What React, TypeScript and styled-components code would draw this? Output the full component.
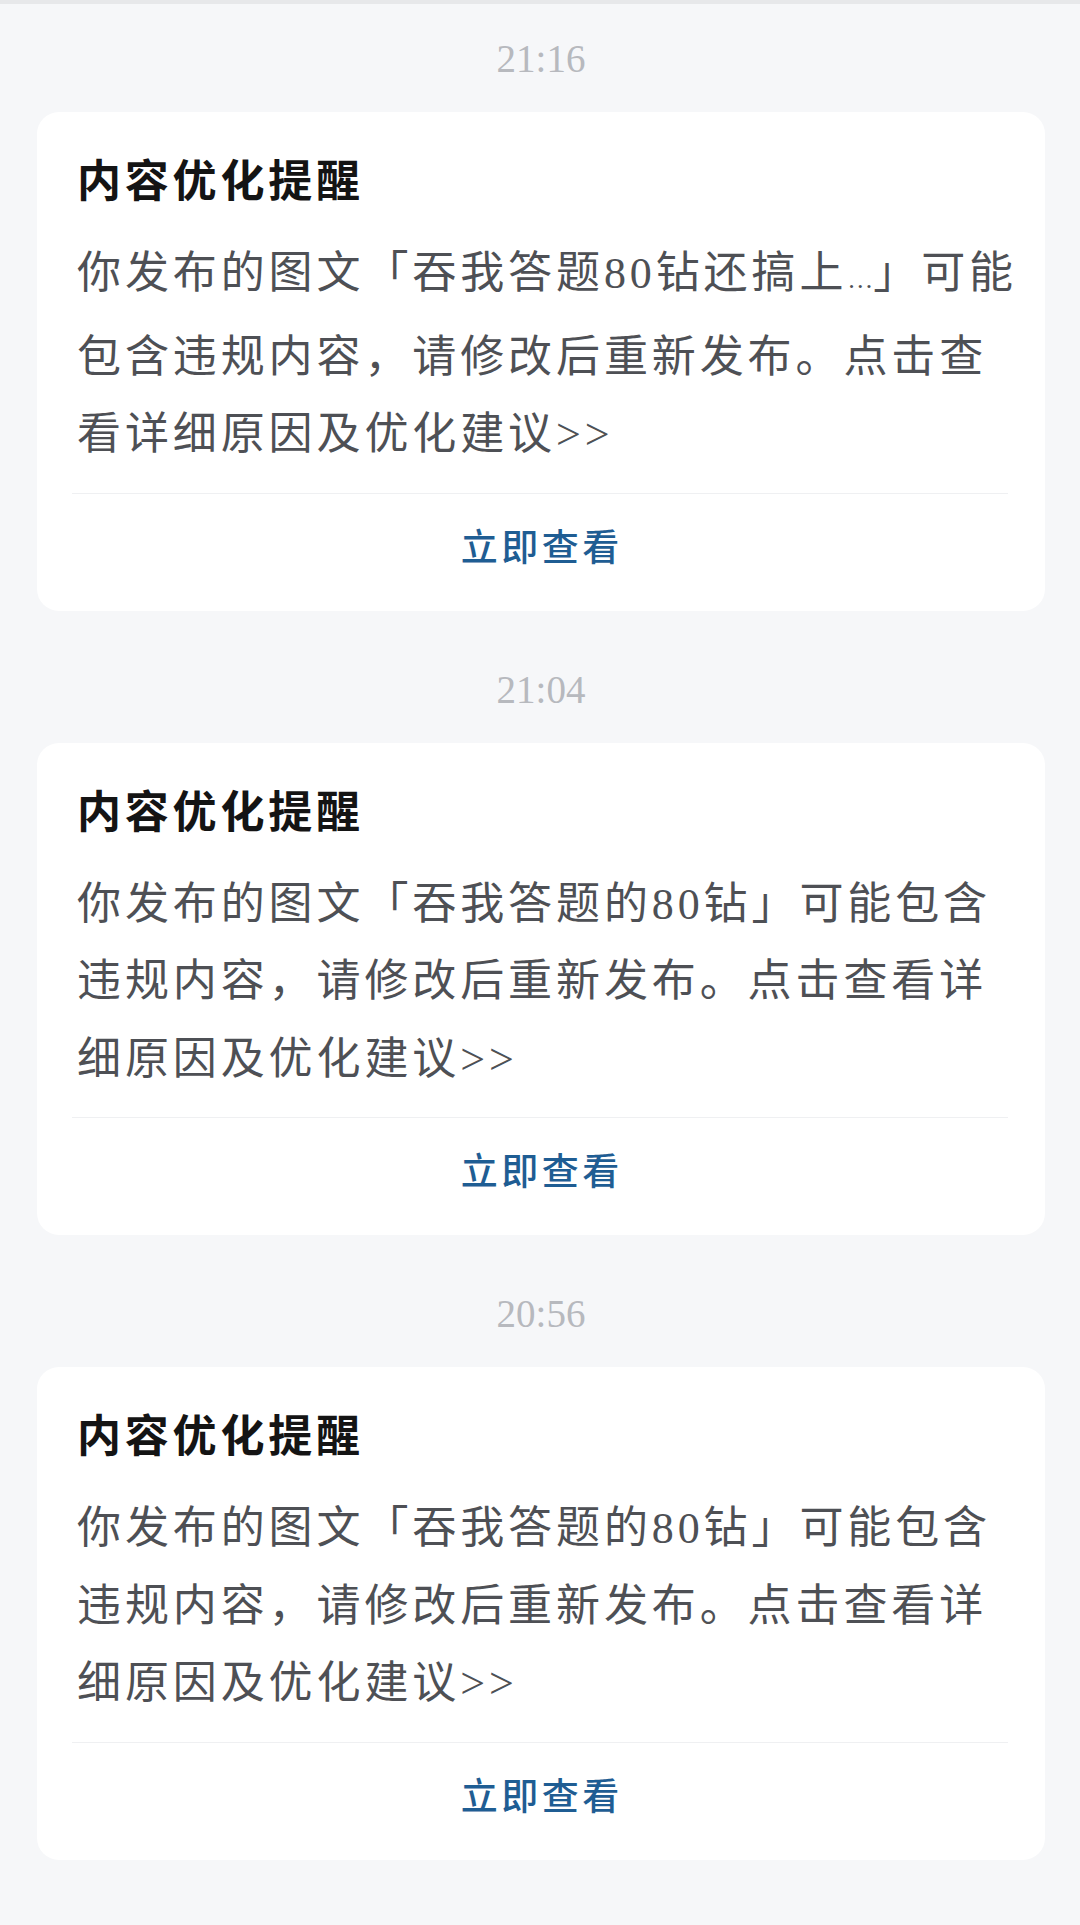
import styled, { createGlobalStyle } from 'styled-components';

const GlobalStyle = createGlobalStyle`
  html, body {
    margin: 0;
    padding: 0;
    background: #f6f7f9;
  }
  body {
    min-height: 100vh;
    font-family: "Liberation Serif", "Noto Sans CJK SC", serif;
  }
`;

const TopLine = styled.div`
  height: 4px;
  background: #e7e8ea;
`;

const List = styled.main`
  padding: 1px 35px 0 37px;
  display: flex;
  flex-direction: column;
`;

const Time = styled.div`
  height: 107px;
  display: flex;
  align-items: center;
  justify-content: center;
  font-size: 39px;
  color: #b7b9be;
`;

const Card = styled.section`
  background: #fff;
  border-radius: 22px;
  padding: 41px 37px 15px 35px;
  margin-bottom: 25px;
`;

const Title = styled.h2`
  margin: 0 0 22px;
  padding-left: 5px;
  font-size: 44px;
  line-height: 60px;
  font-weight: 700;
  letter-spacing: 3.8px;
  color: #141414;
`;

const Body = styled.p`
  margin: 0 -19px 0 0;
  padding-left: 5px;
  font-size: 44px;
  line-height: 77.5px;
  letter-spacing: 3.9px;
  color: #4e5055;
`;

const Ellipsis = styled.span`
  font-size: 26px;
  letter-spacing: 0;
`;

const Divider = styled.div`
  height: 1px;
  margin-top: 19px;
  background: #eff0f2;
`;

const Action = styled.button`
  display: block;
  width: 100%;
  height: 102px;
  border: 0;
  padding: 0 0 0 3.5px;
  background: none;
  font-family: "Noto Sans CJK SC", sans-serif;
  font-size: 37px;
  font-weight: 500;
  letter-spacing: 3.5px;
  color: #1f5d93;
  cursor: pointer;
`;

type Notice = {
  time: string;
  body: React.ReactNode;
};

const tail = '」可能包含违规内容，请修改后重新发布。点击查看详细原因及优化建议>>';

const notices: Notice[] = [
  {
    time: '21:16',
    body: (
      <>
        你发布的图文「吞我答题80钻还搞上<Ellipsis>…</Ellipsis>
        {tail}
      </>
    ),
  },
  { time: '21:04', body: `你发布的图文「吞我答题的80钻${tail}` },
  { time: '20:56', body: `你发布的图文「吞我答题的80钻${tail}` },
];

function App() {
  return (
    <>
      <GlobalStyle />
      <TopLine />
      <List>
        {notices.map((n) => (
          <div key={n.time}>
            <Time>{n.time}</Time>
            <Card>
              <Title>内容优化提醒</Title>
              <Body>{n.body}</Body>
              <Divider />
              <Action>立即查看</Action>
            </Card>
          </div>
        ))}
      </List>
    </>
  );
}

export default App;
